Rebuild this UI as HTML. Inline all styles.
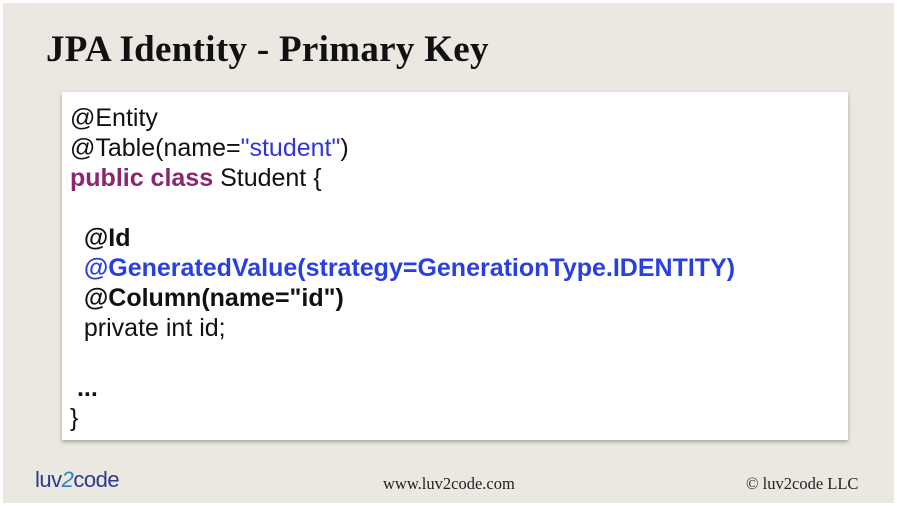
<!DOCTYPE html>
<html><head><style>
body{margin:0;width:897px;height:506px;overflow:hidden;background:#fff;position:relative;}
.pg{position:absolute;left:3px;top:3px;width:891px;height:500px;background:#ebe8e2;}
.t{position:absolute;left:46px;top:28px;font-family:"Liberation Serif",serif;font-weight:bold;font-size:37px;color:#111;letter-spacing:0.3px;}
.box{position:absolute;left:62px;top:92px;width:786px;height:348px;background:#fff;box-shadow:0 2px 4px rgba(0,0,0,0.3);}
.c{position:absolute;font-family:"Liberation Sans",sans-serif;font-size:25px;color:#111;white-space:pre;line-height:30px;}
.f{position:absolute;font-family:"Liberation Serif",serif;font-size:16.5px;color:#222;}
</style></head><body><div class="pg"></div>
<div class="t">JPA Identity - Primary Key</div>
<div class="box"></div>
<div class="c" style="left:70px;top:103px">@Entity
@Table(name=<span style="color:#3333dd">"student"</span>)
<b style="color:#8b2570">public class</b> Student {

  <b>@Id</b>
  <b style="color:#2a3fe0">@GeneratedValue(strategy=GenerationType.IDENTITY)</b>
  <b>@Column(name="id")</b>
  private int id;

 <b>...</b>
}</div>
<div style="position:absolute;left:35px;top:467px;font-family:'Liberation Sans',sans-serif;font-size:22px;color:#2b3a8a;letter-spacing:-0.5px">luv<span style="color:#2a7fc0;font-style:italic">2</span>code</div>
<div class="f" style="left:383px;top:474px">www.luv2code.com</div>
<div class="f" style="left:746px;top:474px">© luv2code LLC</div>
</body></html>
